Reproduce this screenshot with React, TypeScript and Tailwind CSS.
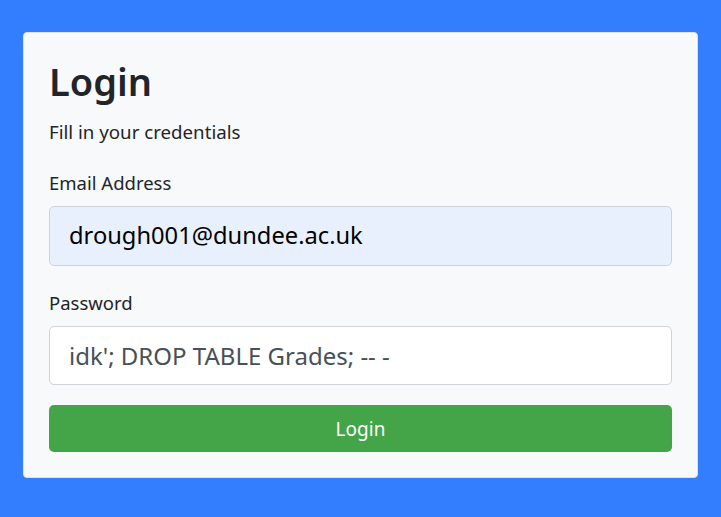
export default function App() {
  return (
    <div className="w-[721px] h-[517px] bg-[#337eff] pt-[32px] pl-[23px]" style={{ fontFamily: '"Noto Sans", "Open Sans", sans-serif' }}>
      <div className="w-[675px] h-[446px] bg-[#f8f9fa] border border-[#dee2e6] rounded-[4px] px-[25px] pt-[25px]">
        <h1 className="text-[38px] leading-[46px] font-semibold text-[#212529]">Login</h1>
        <p className="mt-[14px] text-[18.7px] leading-[27px] text-[#212529]">Fill in your credentials</p>
        <label className="block mt-[24px] text-[18.5px] leading-[27px] text-[#212529]">Email Address</label>
        <div className="mt-[10px] h-[60px] bg-[#e8f0fe] border border-[#ced4da] rounded-[5px] pl-[19px] flex items-center text-[23.7px] text-[#000]">
          drough001@dundee.ac.uk
        </div>
        <label className="block mt-[23px] text-[18.5px] leading-[27px] text-[#212529]">Password</label>
        <div className="mt-[10px] h-[59px] bg-white border border-[#ced4da] rounded-[5px] pl-[19px] flex items-center text-[24px] text-[#495057]">
          idk'; DROP TABLE Grades; -- -
        </div>
        <button className="mt-[20px] w-full h-[47px] bg-[#43a547] rounded-[5px] text-white text-[19px] flex items-center justify-center pt-[2px]">
          Login
        </button>
      </div>
    </div>
  );
}
